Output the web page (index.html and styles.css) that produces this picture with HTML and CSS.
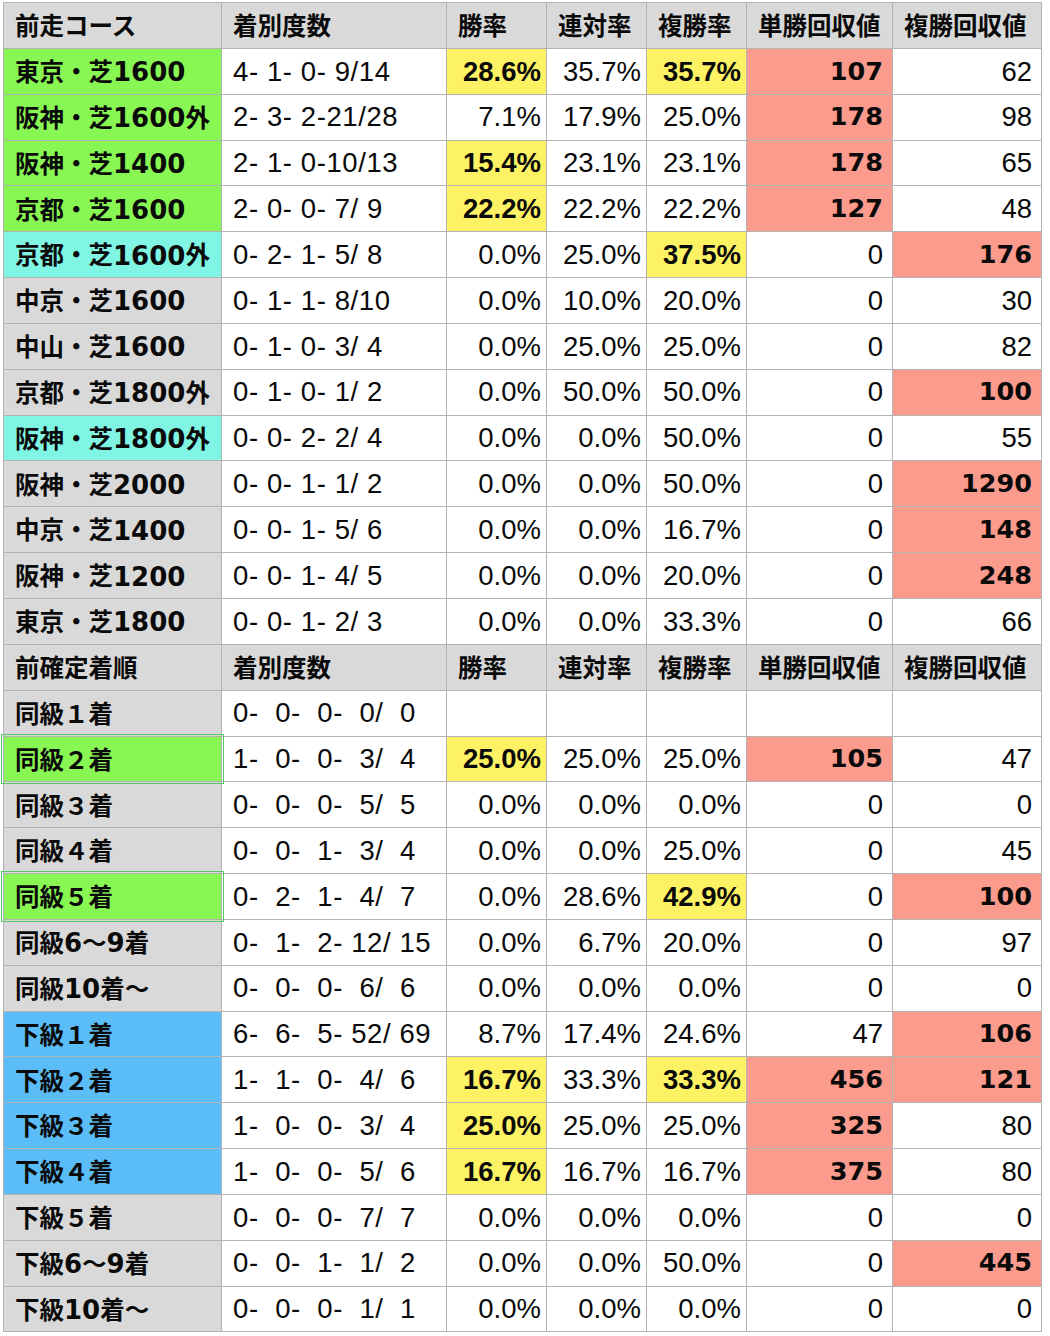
FILE: index.html
```html
<!DOCTYPE html>
<html lang="ja">
<head>
<meta charset="utf-8">
<title>前走コース・前確定着順</title>
<link rel="stylesheet" href="styles.css">
</head>
<body>
<div class="sheet">
  <div class="c hd">前走コース</div><div class="c hd">着別度数</div><div class="c hd">勝率</div><div class="c hd">連対率</div><div class="c hd">複勝率</div><div class="c hd">単勝回収値</div><div class="c hd">複勝回収値</div>

  <div class="c lb green">東京・芝<span class="d">1600</span></div><div class="c rec">4- 1- 0- 9/14</div><div class="c pc y">28.6%</div><div class="c pc">35.7%</div><div class="c pc y">35.7%</div><div class="c nm p">107</div><div class="c nm">62</div>
  <div class="c lb green">阪神・芝<span class="d">1600</span>外</div><div class="c rec">2- 3- 2-21/28</div><div class="c pc">7.1%</div><div class="c pc">17.9%</div><div class="c pc">25.0%</div><div class="c nm p">178</div><div class="c nm">98</div>
  <div class="c lb green">阪神・芝<span class="d">1400</span></div><div class="c rec">2- 1- 0-10/13</div><div class="c pc y">15.4%</div><div class="c pc">23.1%</div><div class="c pc">23.1%</div><div class="c nm p">178</div><div class="c nm">65</div>
  <div class="c lb green">京都・芝<span class="d">1600</span></div><div class="c rec">2- 0- 0- 7/ 9</div><div class="c pc y">22.2%</div><div class="c pc">22.2%</div><div class="c pc">22.2%</div><div class="c nm p">127</div><div class="c nm">48</div>
  <div class="c lb cyan">京都・芝<span class="d">1600</span>外</div><div class="c rec">0- 2- 1- 5/ 8</div><div class="c pc">0.0%</div><div class="c pc">25.0%</div><div class="c pc y">37.5%</div><div class="c nm">0</div><div class="c nm p">176</div>
  <div class="c lb">中京・芝<span class="d">1600</span></div><div class="c rec">0- 1- 1- 8/10</div><div class="c pc">0.0%</div><div class="c pc">10.0%</div><div class="c pc">20.0%</div><div class="c nm">0</div><div class="c nm">30</div>
  <div class="c lb">中山・芝<span class="d">1600</span></div><div class="c rec">0- 1- 0- 3/ 4</div><div class="c pc">0.0%</div><div class="c pc">25.0%</div><div class="c pc">25.0%</div><div class="c nm">0</div><div class="c nm">82</div>
  <div class="c lb">京都・芝<span class="d">1800</span>外</div><div class="c rec">0- 1- 0- 1/ 2</div><div class="c pc">0.0%</div><div class="c pc">50.0%</div><div class="c pc">50.0%</div><div class="c nm">0</div><div class="c nm p">100</div>
  <div class="c lb cyan">阪神・芝<span class="d">1800</span>外</div><div class="c rec">0- 0- 2- 2/ 4</div><div class="c pc">0.0%</div><div class="c pc">0.0%</div><div class="c pc">50.0%</div><div class="c nm">0</div><div class="c nm">55</div>
  <div class="c lb">阪神・芝<span class="d">2000</span></div><div class="c rec">0- 0- 1- 1/ 2</div><div class="c pc">0.0%</div><div class="c pc">0.0%</div><div class="c pc">50.0%</div><div class="c nm">0</div><div class="c nm p">1290</div>
  <div class="c lb">中京・芝<span class="d">1400</span></div><div class="c rec">0- 0- 1- 5/ 6</div><div class="c pc">0.0%</div><div class="c pc">0.0%</div><div class="c pc">16.7%</div><div class="c nm">0</div><div class="c nm p">148</div>
  <div class="c lb">阪神・芝<span class="d">1200</span></div><div class="c rec">0- 0- 1- 4/ 5</div><div class="c pc">0.0%</div><div class="c pc">0.0%</div><div class="c pc">20.0%</div><div class="c nm">0</div><div class="c nm p">248</div>
  <div class="c lb">東京・芝<span class="d">1800</span></div><div class="c rec">0- 0- 1- 2/ 3</div><div class="c pc">0.0%</div><div class="c pc">0.0%</div><div class="c pc">33.3%</div><div class="c nm">0</div><div class="c nm">66</div>

  <div class="c hd">前確定着順</div><div class="c hd">着別度数</div><div class="c hd">勝率</div><div class="c hd">連対率</div><div class="c hd">複勝率</div><div class="c hd">単勝回収値</div><div class="c hd">複勝回収値</div>

  <div class="c lb">同級１着</div><div class="c rec">0-  0-  0-  0/  0</div><div class="c pc"></div><div class="c pc"></div><div class="c pc"></div><div class="c nm"></div><div class="c nm"></div>
  <div class="c lb green sel">同級２着</div><div class="c rec">1-  0-  0-  3/  4</div><div class="c pc y">25.0%</div><div class="c pc">25.0%</div><div class="c pc">25.0%</div><div class="c nm p">105</div><div class="c nm">47</div>
  <div class="c lb">同級３着</div><div class="c rec">0-  0-  0-  5/  5</div><div class="c pc">0.0%</div><div class="c pc">0.0%</div><div class="c pc">0.0%</div><div class="c nm">0</div><div class="c nm">0</div>
  <div class="c lb">同級４着</div><div class="c rec">0-  0-  1-  3/  4</div><div class="c pc">0.0%</div><div class="c pc">0.0%</div><div class="c pc">25.0%</div><div class="c nm">0</div><div class="c nm">45</div>
  <div class="c lb green sel">同級５着</div><div class="c rec">0-  2-  1-  4/  7</div><div class="c pc">0.0%</div><div class="c pc">28.6%</div><div class="c pc y">42.9%</div><div class="c nm">0</div><div class="c nm p">100</div>
  <div class="c lb">同級<span class="d">6</span>〜<span class="d">9</span>着</div><div class="c rec">0-  1-  2- 12/ 15</div><div class="c pc">0.0%</div><div class="c pc">6.7%</div><div class="c pc">20.0%</div><div class="c nm">0</div><div class="c nm">97</div>
  <div class="c lb">同級<span class="d">10</span>着〜</div><div class="c rec">0-  0-  0-  6/  6</div><div class="c pc">0.0%</div><div class="c pc">0.0%</div><div class="c pc">0.0%</div><div class="c nm">0</div><div class="c nm">0</div>
  <div class="c lb blue">下級１着</div><div class="c rec">6-  6-  5- 52/ 69</div><div class="c pc">8.7%</div><div class="c pc">17.4%</div><div class="c pc">24.6%</div><div class="c nm">47</div><div class="c nm p">106</div>
  <div class="c lb blue">下級２着</div><div class="c rec">1-  1-  0-  4/  6</div><div class="c pc y">16.7%</div><div class="c pc">33.3%</div><div class="c pc y">33.3%</div><div class="c nm p">456</div><div class="c nm p">121</div>
  <div class="c lb blue">下級３着</div><div class="c rec">1-  0-  0-  3/  4</div><div class="c pc y">25.0%</div><div class="c pc">25.0%</div><div class="c pc">25.0%</div><div class="c nm p">325</div><div class="c nm">80</div>
  <div class="c lb blue">下級４着</div><div class="c rec">1-  0-  0-  5/  6</div><div class="c pc y">16.7%</div><div class="c pc">16.7%</div><div class="c pc">16.7%</div><div class="c nm p">375</div><div class="c nm">80</div>
  <div class="c lb">下級５着</div><div class="c rec">0-  0-  0-  7/  7</div><div class="c pc">0.0%</div><div class="c pc">0.0%</div><div class="c pc">0.0%</div><div class="c nm">0</div><div class="c nm">0</div>
  <div class="c lb">下級<span class="d">6</span>〜<span class="d">9</span>着</div><div class="c rec">0-  0-  1-  1/  2</div><div class="c pc">0.0%</div><div class="c pc">0.0%</div><div class="c pc">50.0%</div><div class="c nm">0</div><div class="c nm p">445</div>
  <div class="c lb">下級<span class="d">10</span>着〜</div><div class="c rec">0-  0-  0-  1/  1</div><div class="c pc">0.0%</div><div class="c pc">0.0%</div><div class="c pc">0.0%</div><div class="c nm">0</div><div class="c nm">0</div>
</div>
</body>
</html>
```

FILE: styles.css
```css
html, body {
  margin: 0;
  padding: 0;
  background: #ffffff;
}

body {
  font-family: "Liberation Sans", "Noto Sans CJK JP", sans-serif;
  font-size: 27.5px;
  color: #0a0a0a;
}

.sheet {
  display: grid;
  grid-template-columns: 217px 224px 99px 99px 99px 145px 148px;
  grid-auto-rows: 44.85px;
  gap: 1px;
  padding: 1px;
  width: max-content;
  margin: 2px 0 0 3px;
  background: #b3b3b3;
}

.c {
  background: #ffffff;
  display: flex;
  align-items: center;
  white-space: pre;
  line-height: 1;
}

.hd {
  background: #d9d9d9;
  font-family: "Noto Sans CJK JP", sans-serif;
  font-size: 24.5px;
  font-weight: 700;
  padding-left: 11px;
}

.lb {
  background: #d9d9d9;
  font-family: "Noto Sans CJK JP", sans-serif;
  font-size: 24.5px;
  font-weight: 700;
  padding-left: 11px;
}

.lb .d {
  font-family: "DejaVu Sans", sans-serif;
  font-size: 26px;
  font-weight: 700;
  position: relative;
  top: 1px;
}

.rec {
  padding-left: 11px;
  letter-spacing: 0.6px;
}

.pc {
  justify-content: flex-end;
  padding-right: 5px;
}

.nm {
  justify-content: flex-end;
  padding-right: 9px;
}

.green { background: #89f753; }
.cyan { background: #80f5e4; }
.blue { background: #5abdf7; }

.y {
  background: #fcf263;
  font-weight: 700;
}

.p {
  background: #fa9b8d;
  font-weight: 700;
}

.nm.p {
  font-family: "DejaVu Sans", sans-serif;
  font-size: 25.5px;
}

.sel {
  position: relative;
  z-index: 1;
  outline: 1.5px solid #52cb64;
  outline-offset: 2.5px;
}
```
